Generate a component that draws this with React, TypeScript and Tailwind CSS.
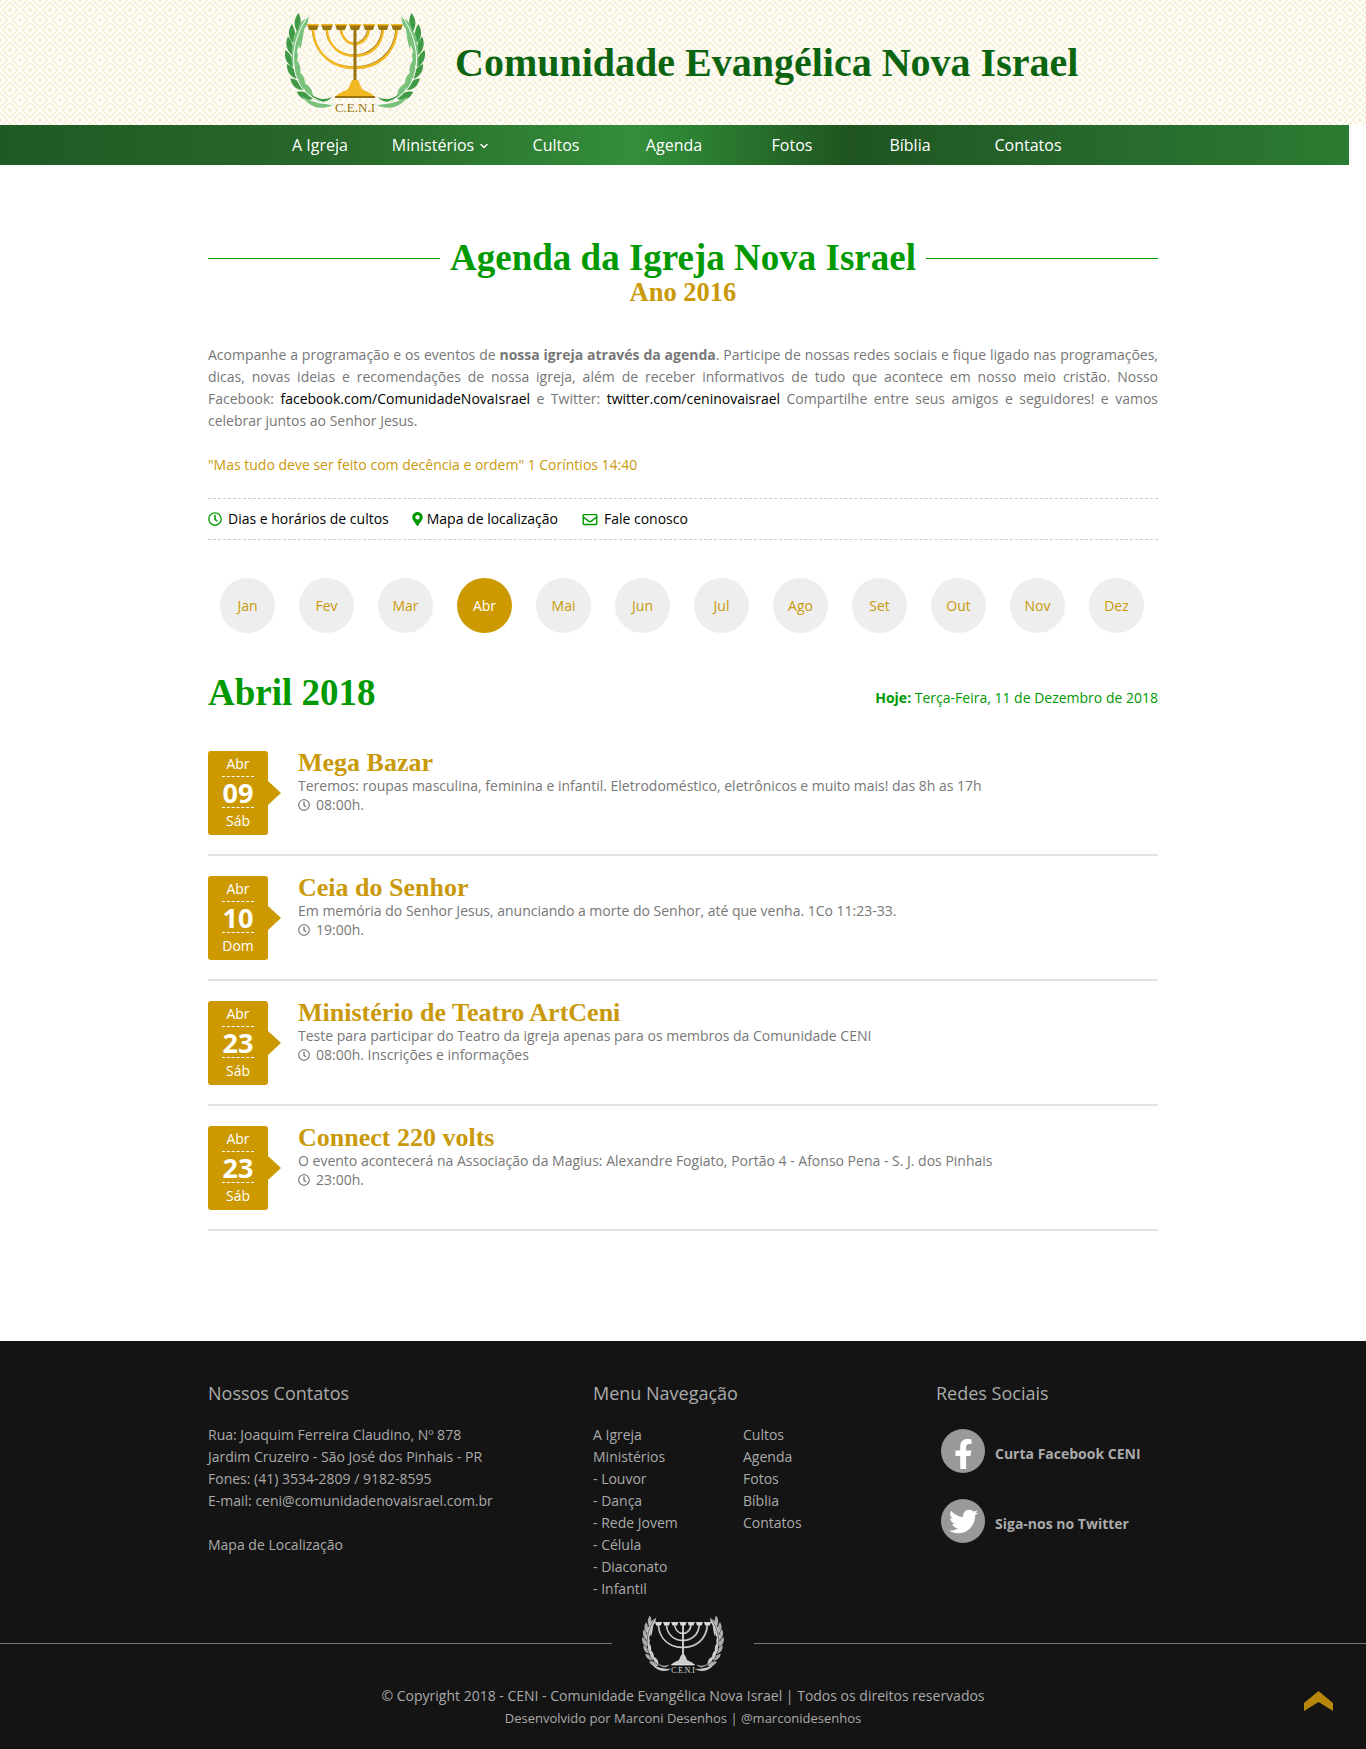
import { ChevronDown } from "lucide-react";
import { FaFacebookF, FaTwitter, FaRegClock, FaMapMarkerAlt, FaRegEnvelope } from "react-icons/fa";

const months = ["Jan", "Fev", "Mar", "Abr", "Mai", "Jun", "Jul", "Ago", "Set", "Out", "Nov", "Dez"];
const navItems = ["A Igreja", "Ministérios", "Cultos", "Agenda", "Fotos", "Bíblia", "Contatos"];

const events = [
  { day: "09", week: "Sáb", title: "Mega Bazar", desc: "Teremos: roupas masculina, feminina e infantil. Eletrodoméstico, eletrônicos e muito mais! das 8h as 17h", time: "08:00h." },
  { day: "10", week: "Dom", title: "Ceia do Senhor", desc: "Em memória do Senhor Jesus, anunciando a morte do Senhor, até que venha. 1Co 11:23-33.", time: "19:00h." },
  { day: "23", week: "Sáb", title: "Ministério de Teatro ArtCeni", desc: "Teste para participar do Teatro da igreja apenas para os membros da Comunidade CENI", time: "08:00h. Inscrições e informações" },
  { day: "23", week: "Sáb", title: "Connect 220 volts", desc: "O evento acontecerá na Associação da Magius: Alexandre Fogiato, Portão 4 - Afonso Pena - S. J. dos Pinhais", time: "23:00h." },
];

const menuLeft = ["A Igreja", "Ministérios", "- Louvor", "- Dança", "- Rede Jovem", "- Célula", "- Diaconato", "- Infantil"];
const menuRight = ["Cultos", "Agenda", "Fotos", "Bíblia", "Contatos"];

const titleFont = "font-['Liberation_Serif',serif] font-bold";

// x, y, heading of the branch (0 = up)
const branch = [
  [38, 97, -52], [28, 88, -36], [21, 77, -22], [16, 65, -10], [15, 53, 2], [16, 41, 12], [21, 30, 20],
];

function Wreath({ leaf, light, line }: { leaf: string; light: string; line: string }) {
  return (
    <g>
      {branch.map(([x, y, r], i) => (
        <g key={i} transform={`translate(${x} ${y})`}>
          <path transform={`rotate(${r - 16})`} d="M0 0C-5 -6 -5 -13 0 -19C4 -13 4 -6 0 0Z" fill={leaf} />
          <path transform={`rotate(${r + 20})`} d="M0 0C-4 -6 -4 -13 0 -19C5 -13 5 -6 0 0Z" fill={light} />
        </g>
      ))}
      <path d="M35 13C26 24 29 36 24 47C20 38 24 22 35 13Z" fill={light} />
      <path d="M26 94C38 101 50 103 63 102C52 108 36 108 26 94Z" fill={light} />
      <path d="M36 92C44 98 52 98 60 95C52 102 42 102 36 92Z" fill={leaf} />
      <path d="M33 14C20 30 10 56 22 80C28 92 44 101 62 103" fill="none" stroke={line} strokeWidth="1" />
    </g>
  );
}

function Logo({ gold, dark, leaf, light, line, className }: { gold: string; dark: string; leaf: string; light: string; line: string; className: string }) {
  const cups = [43, 57, 71, 85, 99, 113, 127];
  return (
    <svg viewBox="0 0 170 120" className={className}>
      <g transform="translate(8.5 2) scale(0.9 1)">
        <Wreath leaf={leaf} light={light} line={line} />
        <g transform="translate(170 0) scale(-1 1)">
          <Wreath leaf={leaf} light={light} line={line} />
        </g>
      </g>
      <g fill="none" stroke={dark} strokeWidth="1.2" transform="translate(-1 -1)">
        <path d="M43 30C45 54 62 68 85 68C108 68 125 54 127 30" />
        <path d="M57 30C58 46 70 56 85 56C100 56 112 46 113 30" />
        <path d="M71 30C72 37 77 44 85 44C93 44 98 37 99 30" />
      </g>
      <g fill="none" stroke={gold} strokeWidth="2.4">
        <path d="M43 30C45 54 62 68 85 68C108 68 125 54 127 30" />
        <path d="M57 30C58 46 70 56 85 56C100 56 112 46 113 30" />
        <path d="M71 30C72 37 77 44 85 44C93 44 98 37 99 30" />
      </g>
      <rect x="83.5" y="28" width="3" height="56" fill={dark} />
      {cups.map((x) => (
        <g key={x}>
          <path d={`M${x - 6} 24H${x + 6}L${x + 4} 30H${x - 4}Z`} fill={dark} />
          <rect x={x - 6} y="24" width="12" height="1.5" fill={gold} />
        </g>
      ))}
      <path d="M82 80H88L92 89C96 92 102 92 105 98H65C68 92 74 92 78 89Z" fill={gold} />
      <rect x="65" y="96" width="40" height="2" fill={dark} />
      <text x="85" y="112" textAnchor="middle" fontSize="13" fontFamily="Liberation Serif, serif" fill={dark}>C.E.N.I</text>
    </svg>
  );
}

export default function App() {
  return (
    <div className="w-[1366px] bg-white font-['Open_Sans',sans-serif] text-[14px] leading-[22px] text-[#777] overflow-hidden">
      <header className="relative h-[125px] bg-[#fffefa]">
        <svg className="absolute inset-0 w-full h-full" aria-hidden="true">
          <defs>
            <pattern id="diamonds" width="20" height="20" patternUnits="userSpaceOnUse">
              <path d="M10 2.5L17.5 10L10 17.5L2.5 10Z" fill="none" stroke="#f6edd3" strokeWidth="1.5" />
              <path d="M10 7.5L12.5 10L10 12.5L7.5 10Z" fill="#f6edd3" />
              <path d="M0 -7.5L7.5 0L0 7.5L-7.5 0Z M20 -7.5L27.5 0L20 7.5L12.5 0Z M0 12.5L7.5 20L0 27.5L-7.5 20Z M20 12.5L27.5 20L20 27.5L12.5 20Z" fill="none" stroke="#f6edd3" strokeWidth="1.5" />
              <path d="M0 -2.5L2.5 0L0 2.5L-2.5 0Z M20 -2.5L22.5 0L20 2.5L17.5 0Z M0 17.5L2.5 20L0 22.5L-2.5 20Z M20 17.5L22.5 20L20 22.5L17.5 20Z" fill="#f6edd3" />
            </pattern>
          </defs>
          <rect width="100%" height="100%" fill="url(#diamonds)" />
        </svg>
        <div className="relative flex pl-[270px] h-full">
          <Logo gold="#f2b824" dark="#9a7410" leaf="#3f9a45" light="#79c27c" line="#ffffff" className="w-[170px] h-[120px] shrink-0" />
          <span className={`self-center ml-[15px] text-[40px] text-[#0b6410] whitespace-nowrap ${titleFont}`}>Comunidade Evangélica Nova Israel</span>
        </div>
      </header>

      <nav className="w-[1349px] h-[40px] flex pl-[261px] bg-[linear-gradient(90deg,#1f5a25_0%,#28682a_25%,#338e3a_47%,#2c7f33_52%,#1f5420_63%,#24622a_75%,#2c7b32_100%)]">
        {navItems.map((item) => (
          <a key={item} className={`w-[118px] flex items-center justify-center text-[16px] font-medium text-white ${item === "Ministérios" ? "pl-[6px]" : ""}`}>
            {item}
            {item === "Ministérios" && <ChevronDown className="w-[12px] h-[12px] ml-[4px] mt-[2px]" strokeWidth={3} />}
          </a>
        ))}
      </nav>

      <main className="w-[950px] ml-[208px] h-[1176px] pt-[70px]">
        <div className="flex items-center gap-[10px] h-[46px]">
          <div className="flex-1 h-px bg-[#090]" />
          <h1 className={`text-[37px] leading-[46px] text-[#090] ${titleFont}`}>Agenda da Igreja Nova Israel</h1>
          <div className="flex-1 h-px bg-[#090]" />
        </div>
        <h2 className={`text-center text-[26.5px] leading-[34px] -mt-[6px] text-[#c9990a] ${titleFont}`}>Ano 2016</h2>

        <p className="mt-[35px] text-justify">
          Acompanhe a programação e os eventos de <strong className="font-bold">nossa igreja através da agenda</strong>. Participe de nossas redes sociais e fique ligado nas programações, dicas, novas ideias e recomendações de nossa igreja, além de receber informativos de tudo que acontece em nosso meio cristão. Nosso Facebook: <a className="text-black">facebook.com/ComunidadeNovaIsrael</a> e Twitter: <a className="text-black">twitter.com/ceninovaisrael</a> Compartilhe entre seus amigos e seguidores! e vamos celebrar juntos ao Senhor Jesus.
        </p>
        <p className="mt-[22px] text-[#c9990a]">"Mas tudo deve ser feito com decência e ordem" 1 Coríntios 14:40</p>

        <div className="mt-[22px] h-[42px] flex items-center border-y border-dashed border-[#ccc] text-black">
          <a className="flex items-center">
            <FaRegClock className="w-[14px] h-[14px] text-[#090] mr-[6px]" />
            Dias e horários de cultos
          </a>
          <a className="flex items-center ml-[23px]">
            <FaMapMarkerAlt className="w-[11px] h-[14px] text-[#090] mr-[4px]" />
            Mapa de localização
          </a>
          <a className="flex items-center ml-[24px]">
            <FaRegEnvelope className="w-[16px] h-[15px] text-[#090] mr-[6px]" />
            Fale conosco
          </a>
        </div>

        <div className="mt-[38px] pl-[12px] flex gap-[24px]">
          {months.map((m) => (
            <a key={m} className={`w-[55px] h-[55px] rounded-full flex items-center justify-center ${m === "Abr" ? "bg-[#c90] text-white" : "bg-[#eee] text-[#c9990a]"}`}>
              {m}
            </a>
          ))}
        </div>

        <div className="mt-[37px] flex items-start justify-between">
          <h2 className={`text-[37px] leading-[46px] text-[#090] ${titleFont}`}>Abril 2018</h2>
          <p className="text-[#090] mt-[17px]"><strong className="font-bold">Hoje:</strong> Terça-Feira, 11 de Dezembro de 2018</p>
        </div>

        <div className="mt-[35px]">
          {events.map((ev, i) => (
            <div key={i} className="h-[125px]">
              <div className="h-[105px] flex border-b-2 border-[#e3e3e3]">
                <div className="relative w-[60px] h-[84px] rounded-[3px] bg-[#c90] text-white text-center shrink-0">
                  <div className="h-[25px] leading-[26px]">Abr</div>
                  <div className="w-[32px] ml-[14px] h-[32px] border-y border-dashed border-white text-[27px] leading-[31px] font-bold">{ev.day}</div>
                  <div className="h-[25px] leading-[25px]">{ev.week}</div>
                  <div className="absolute left-[60px] top-[30px] w-0 h-0 border-y-[12px] border-y-transparent border-l-[13px] border-l-[#c90]" />
                </div>
                <div className="ml-[30px]">
                  <h3 className={`text-[26px] leading-[24px] text-[#c9990a] ${titleFont}`}>{ev.title}</h3>
                  <p className="leading-[19px] mt-[1px]">{ev.desc}</p>
                  <p className="leading-[19px] flex items-center">
                    <FaRegClock className="w-[12px] h-[12px] mr-[6px]" />
                    {ev.time}
                  </p>
                </div>
              </div>
            </div>
          ))}
        </div>
      </main>

      <footer className="relative h-[408px] bg-[#141414] text-[#aaa]">
        <div className="w-[950px] ml-[208px] flex pt-[39px]">
          <div className="w-[385px]">
            <h4 className="text-[18px] leading-[26px]">Nossos Contatos</h4>
            <div className="mt-[18px]">
              <p>Rua: Joaquim Ferreira Claudino, Nº 878</p>
              <p>Jardim Cruzeiro - São José dos Pinhais - PR</p>
              <p>Fones: (41) 3534-2809 / 9182-8595</p>
              <p>E-mail: ceni@comunidadenovaisrael.com.br</p>
              <p className="mt-[22px]">Mapa de Localização</p>
            </div>
          </div>
          <div className="w-[343px]">
            <h4 className="text-[18px] leading-[26px]">Menu Navegação</h4>
            <div className="mt-[18px] flex">
              <ul className="w-[150px]">
                {menuLeft.map((m) => <li key={m}>{m}</li>)}
              </ul>
              <ul>
                {menuRight.map((m) => <li key={m}>{m}</li>)}
              </ul>
            </div>
          </div>
          <div>
            <h4 className="text-[18px] leading-[26px]">Redes Sociais</h4>
            <a className="flex items-center mt-[23px] ml-[5px] font-bold">
              <span className="w-[44px] h-[44px] rounded-full bg-[#999] flex items-center justify-center text-white mr-[10px] overflow-hidden">
                <FaFacebookF className="w-[19px] h-[30px] mt-[6px]" />
              </span>
              <span className="mt-[6px]">Curta Facebook CENI</span>
            </a>
            <a className="flex items-center mt-[26px] ml-[5px] font-bold">
              <span className="w-[44px] h-[44px] rounded-full bg-[#999] flex items-center justify-center text-white mr-[10px]">
                <FaTwitter className="w-[29px] h-[29px]" />
              </span>
              <span className="mt-[6px]">Siga-nos no Twitter</span>
            </a>
          </div>
        </div>

        <div className="absolute left-0 right-0 top-[267px] flex items-center">
          <div className="flex-1 h-px bg-[#777]" />
          <div className="w-[142px] flex justify-center">
            <Logo gold="#ccc" dark="#ddd" leaf="#aaa" light="#ccc" line="#141414" className="w-[100px] h-[70px]" />
          </div>
          <div className="flex-1 h-px bg-[#777]" />
        </div>

        <div className="absolute left-0 right-0 top-[344px] text-center">
          <p>© Copyright 2018 - CENI - Comunidade Evangélica Nova Israel | Todos os direitos reservados</p>
          <p className="text-[13px]">Desenvolvido por Marconi Desenhos | @marconidesenhos</p>
        </div>

        <svg viewBox="0 0 29 20" className="absolute left-[1304px] top-[350px] w-[29px] h-[20px]" fill="#b8860b">
          <path d="M14.5 0L29 12V20L14.5 11L0 20V12Z" />
        </svg>
      </footer>
    </div>
  );
}
